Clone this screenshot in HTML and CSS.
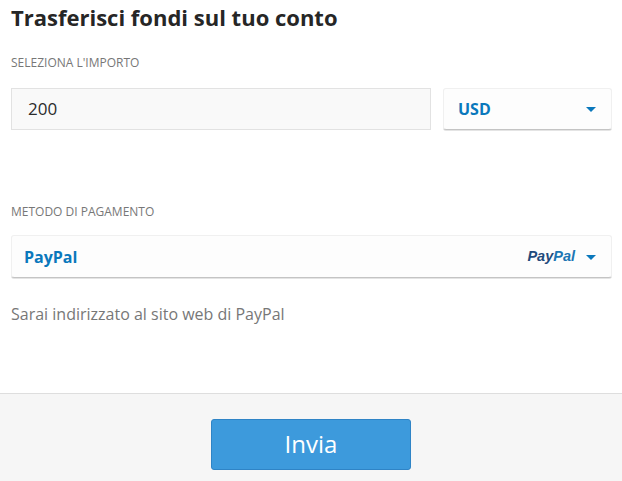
FILE: index.html
```html
<!DOCTYPE html>
<html lang="it">
<head>
    <meta charset="UTF-8">
    <title>Trasferisci fondi</title>
    <link rel="stylesheet" href="styles.css">
</head>
<body>
    <main class="content">
        <h1>Trasferisci fondi sul tuo conto</h1>

        <p class="label amount-label">SELEZIONA L'IMPORTO</p>
        <div class="amount-row">
            <div class="amount-input">200</div>
            <div class="select currency">
                <span class="select-value">USD</span>
                <span class="arrow"></span>
            </div>
        </div>

        <p class="label method-label">METODO DI PAGAMENTO</p>
        <div class="select method">
            <span class="select-value">PayPal</span>
            <span class="logo"><span class="pay">Pay</span><span class="pal">Pal</span></span>
            <span class="arrow"></span>
        </div>
        <p class="note">Sarai indirizzato al sito web di PayPal</p>
    </main>

    <footer class="footer">
        <button class="submit">Invia</button>
    </footer>
</body>
</html>
```

FILE: styles.css
```css
* {
    box-sizing: border-box;
    margin: 0;
    padding: 0;
}
html, body {
    height: 100%;
}
body {
    display: flex;
    flex-direction: column;
    overflow: hidden;
    background: #fff;
    color: #2b2b2b;
    font-family: "Open Sans", sans-serif;
}
/* Form */
.content {
    height: 393px;
    padding: 2px 10px 0 11px;
}
h1 {
    font-size: 22px;
    line-height: 30px;
    font-weight: 700;
    color: #262626;
}
.label {
    font-size: 12px;
    line-height: 16px;
    color: #777;
}
.amount-label {
    margin-top: 23px;
}
.amount-row {
    display: flex;
    gap: 12px;
    margin-top: 17px;
}
.amount-input {
    width: 420px;
    height: 42px;
    padding-left: 16px;
    border: 1px solid #e2e2e2;
    background: #f9f9f9;
    font-size: 17px;
    line-height: 40px;
    color: #2b2b2b;
}
/* Selects */
.select {
    display: flex;
    align-items: center;
    border: 1px solid #f0f0f0;
    border-bottom-color: #c4c4c4;
    border-radius: 3px;
    background: #fdfdfd;
    padding: 0 15px 0 14px;
    box-shadow: 0 1px 0 #e4e4e4;
}
.select-value {
    font-size: 16px;
    font-weight: 700;
    color: #0a78bc;
}
.arrow {
    width: 0;
    height: 0;
    border-left: 5px solid transparent;
    border-right: 5px solid transparent;
    border-top: 5px solid #0a78bc;
}
.currency {
    width: 169px;
    height: 42px;
    justify-content: space-between;
}
.method-label {
    margin-top: 74px;
}
.method {
    height: 43px;
    margin-top: 15px;
    padding-left: 12px;
}
.method .arrow {
    margin-top: 1px;
}
.logo {
    margin-left: auto;
    margin-right: 11px;
    margin-bottom: 2px;
    font-family: "Liberation Sans", sans-serif;
    font-size: 14.5px;
    font-weight: 700;
    font-style: italic;
}
.pay {
    color: #1f4a7c;
}
.pal {
    color: #1c76b4;
}
.note {
    margin-top: 25px;
    font-size: 16px;
    line-height: 22px;
    color: #777;
}
/* Footer */
.footer {
    flex: 1;
    display: flex;
    justify-content: center;
    padding-top: 25px;
    border-top: 1px solid #dedede;
    background: #f6f6f6;
}
.submit {
    width: 200px;
    height: 51px;
    padding-bottom: 2px;
    border: 1px solid #2f84c6;
    border-radius: 3px;
    background: #3d9adc;
    color: #fff;
    font-family: "Open Sans", sans-serif;
    font-size: 24px;
}
```
